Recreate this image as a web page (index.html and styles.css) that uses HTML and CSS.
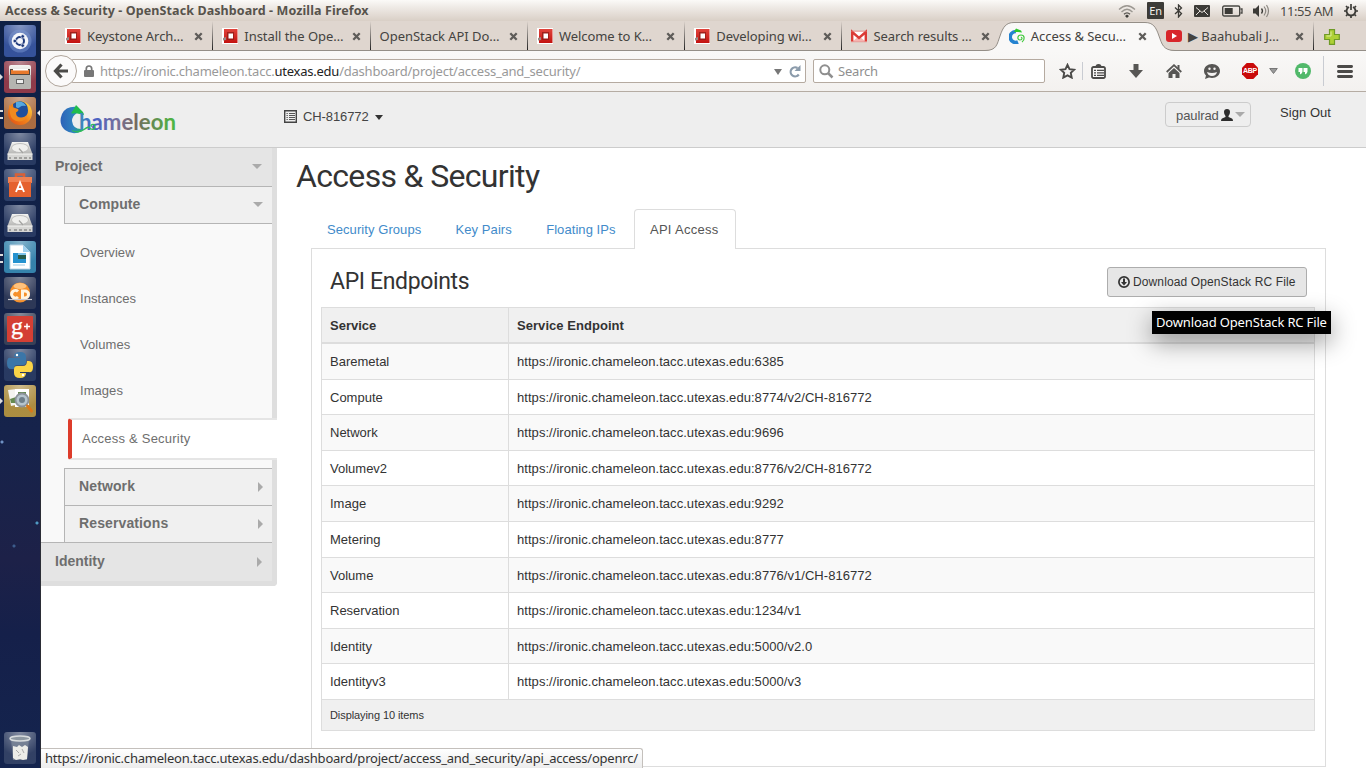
FILE: index.html
```html
<!DOCTYPE html>
<html lang="en">
<head>
<meta charset="utf-8">
<title>Access &amp; Security - OpenStack Dashboard</title>
<link rel="stylesheet" href="styles.css">
</head>
<body>
<svg class="defs" width="0" height="0">
  <defs>
    <radialGradient id="gloss" cx=".5" cy="0" r=".75"><stop offset="0" stop-color="#fff" stop-opacity=".42"/><stop offset="1" stop-color="#fff" stop-opacity=".03"/></radialGradient>
    <linearGradient id="metal" x1="0" y1="0" x2="0" y2="1"><stop offset="0" stop-color="#f4f4f2"/><stop offset="1" stop-color="#b4b4b2"/></linearGradient>
    <linearGradient id="word" x1="0" y1="0" x2="1" y2="0"><stop offset="0" stop-color="#3a8fb8"/><stop offset=".15" stop-color="#4560c8"/><stop offset=".4" stop-color="#77709a"/><stop offset=".58" stop-color="#75695f"/><stop offset="1" stop-color="#4cba42"/></linearGradient>
    <linearGradient id="body" x1="0" y1="0" x2="1" y2="0"><stop offset="0" stop-color="#2c62b8"/><stop offset=".6" stop-color="#2f82c0"/><stop offset="1" stop-color="#22b468"/></linearGradient>
    <linearGradient id="fox" x1="0" y1="1" x2="1" y2="0"><stop offset="0" stop-color="#df4a14"/><stop offset=".5" stop-color="#f2851c"/><stop offset="1" stop-color="#ffe14a"/></linearGradient>
    <linearGradient id="red" x1="0" y1="0" x2="0" y2="1"><stop offset="0" stop-color="#e0443c"/><stop offset="1" stop-color="#c3120f"/></linearGradient>
    <symbol id="stack" viewBox="0 0 16 16"><path fill="#fff" d="M0 0h16v16H0z"/><path fill="url(#red)" d="M2 1h13.500v14H2z"/><path fill="#8d1a16" d="M5 4h7v8H5z" opacity=".75"/><path fill="#9a8a86" d="M1 10l3-1v3l-3 .5z"/><path fill="#fff" d="M6.500 5.500h4.500v5H6.500z"/></symbol>
    <symbol id="x" viewBox="0 0 9 9"><path d="M1.300 1.300l6.400 6.400M7.700 1.300L1.300 7.700" stroke="#5e5c59" stroke-width="2.300"/></symbol>
    <symbol id="drive" viewBox="0 0 32 32"><path fill="url(#metal)" d="M8 9h16l4.500 12h-25z"/><path fill="#d6d6d4" d="M3.500 21h25v6h-25z"/><path d="M3.500 21h25" stroke="#f6f6f4"/><ellipse cx="16" cy="15" rx="8.500" ry="4.500" fill="#efefed" stroke="#b4b4b2" stroke-width=".8"/><path d="M15 15.500l4 4.500" stroke="#a2a2a0" stroke-width="1.200"/><path d="M5 25h2M10 25h3M15 25h3M20 25h3M25 25h2" stroke="#8d8d8b" stroke-width="1.500"/></symbol>
  </defs>
</svg>
<div class="desktop">
  <header class="panel">
    <div class="panel-title">Access &amp; Security - OpenStack Dashboard - Mozilla Firefox</div>
    <div class="indicators">
      <svg width="18" height="14" viewBox="0 0 18 14" fill="none" stroke="#9b9791" stroke-width="1.300"><path d="M1 5.500Q9-2 17 5.500M3.500 8Q9 2.500 14.500 8"/><path d="M6 10.300Q9 7.500 12 10.300" stroke="#55524d"/><path d="M7 12l2-1.500 2 1.500-2 2z" fill="#3c3b37" stroke="none"/></svg>
      <span class="lang">En</span>
      <svg width="9" height="14" viewBox="0 0 9 14" fill="none" stroke="#3c3b37" stroke-width="1.300"><path d="M1 3.500l6.500 6L4.500 13V1l3 3L1 10"/></svg>
      <svg width="16" height="12" viewBox="0 0 16 12"><rect width="16" height="12" rx="1" fill="#3c3b37"/><path d="M2 2.500l6 5 6-5M2 10l4-4M14 10l-4-4" stroke="#e8e3de" fill="none"/></svg>
      <svg width="21" height="12" viewBox="0 0 21 12"><rect x=".7" y="1" width="17" height="10" rx="1.500" fill="none" stroke="#4a4945" stroke-width="1.400"/><rect x="2.700" y="3" width="8" height="6" fill="#3c3b37"/><path d="M18.500 4H20v4h-1.500" fill="none" stroke="#4a4945" stroke-width="1.300"/></svg>
      <svg width="17" height="14" viewBox="0 0 17 14"><path fill="#3c3b37" d="M0 4.500h2.500L6 1v12L2.500 9.500H0z"/><path d="M8.500 4.500q2 2.500 0 5" fill="none" stroke="#3c3b37" stroke-width="1.300"/><path d="M11 2.500q3.500 4.500 0 9M13.500 1q4 6 0 12" fill="none" stroke="#8b8781" stroke-width="1.200"/></svg>
      <span class="clock">11:55 AM</span>
      <svg width="14" height="14" viewBox="0 0 14 14" fill="none" stroke="#3c3b37"><path d="M5 3A4.500 4.500 0 1 0 9 3" stroke-width="1.900"/><path d="M7 0v6" stroke-width="1.700"/><path d="M0 7h2.500M11.500 7H14M2 2l1.500 1.500M12 2l-1.500 1.500M2 12l1.500-1.500M12 12l-1.500-1.500M7 11.500V14" stroke-width="1.700"/></svg>
    </div>
  </header>
  <div class="workspace">
    <nav class="launcher">
      <svg class="tile" viewBox="0 0 32 32"><rect width="32" height="32" rx="3" fill="#2f4d98"/><rect width="32" height="32" rx="3" fill="url(#gloss)"/><circle cx="16" cy="16" r="11.500" fill="#7f9bd4" opacity=".45"/><circle cx="16" cy="16" r="8.300" fill="#f5f7fb"/><circle cx="16" cy="16" r="4" fill="none" stroke="#1f3a7c" stroke-width="2"/><g fill="#1f3a7c" stroke="#f5f7fb" stroke-width=".7"><circle cx="10.800" cy="16" r="1.800"/><circle cx="18.700" cy="11.400" r="1.800"/><circle cx="18.700" cy="20.600" r="1.800"/></g></svg>
      <div class="slot one"><svg class="tile" viewBox="0 0 32 32"><rect width="32" height="32" rx="3" fill="#8b3444"/><rect width="32" height="32" rx="3" fill="url(#gloss)"/><rect x="5" y="4" width="22" height="24" rx="2" fill="url(#metal)"/><path fill="#54473e" d="M6 8h20v6H6z"/><path fill="#e8792c" d="M7 9h18v4H7z"/><path fill="#fff" d="M9 8h15v1.500H9z"/><path fill="#b5b5b1" d="M5 14h22v12a2 2 0 0 1-2 2H7a2 2 0 0 1-2-2z"/><rect x="12.500" y="18.500" width="7" height="4" fill="#eee" stroke="#666"/></svg></div>
      <div class="slot two focus"><svg class="tile" viewBox="0 0 32 32"><rect width="32" height="32" rx="3" fill="#a8683c"/><rect width="32" height="32" rx="3" fill="url(#gloss)"/><circle cx="16" cy="16" r="12" fill="url(#fox)"/><path fill="#1f4f9c" d="M9 7q4-3.500 9-2.500 6 2 6 9 0 6-6 8-6 0-8-5z"/><path fill="#55a8e0" d="M12 5q7-2 10 4-4-1-6 1t-4 0z"/><path fill="#f08a1f" d="M5 8l3 2 6 2q1.500 1.500-2 3.500 0 5 5 5 4 0 6-3-1 7-8 7-8-1-9-8z"/></svg></div>
      <svg class="tile" viewBox="0 0 32 32"><rect width="32" height="32" rx="3" fill="#22345d"/><rect width="32" height="32" rx="3" fill="url(#gloss)"/><use href="#drive"/></svg>
      <svg class="tile" viewBox="0 0 32 32"><rect width="32" height="32" rx="3" fill="#263963"/><rect width="32" height="32" rx="3" fill="url(#gloss)"/><path d="M12 9V5.500h8V9" stroke="#d96036" stroke-width="2.500" fill="none"/><path fill="#f08152" d="M4 8h24v6H4z"/><path fill="#e5622f" d="M5 13h22v15H5z"/><path d="M12 23l4-9.500L20 23M13.500 20h5" fill="none" stroke="#fff" stroke-width="1.900"/></svg>
      <svg class="tile" viewBox="0 0 32 32"><rect width="32" height="32" rx="3" fill="#22345d"/><rect width="32" height="32" rx="3" fill="url(#gloss)"/><use href="#drive"/></svg>
      <div class="slot two"><svg class="tile" viewBox="0 0 32 32"><rect width="32" height="32" rx="3" fill="#2f7fa9"/><rect width="32" height="32" rx="3" fill="url(#gloss)"/><path fill="#fff" stroke="#bcd3e4" d="M6 4h13l7 7v17H6z"/><path fill="#9fd0ee" d="M19 4v7h7z"/><path fill="#2692cf" d="M9 12h13v10H9z"/><path fill="#285c4d" d="M14 13h8v5h-8z"/><path fill="#7fc4ed" d="M14 12h8v2h-8z"/><path d="M9 24h12" stroke="#9fc9e2"/></svg></div>
      <svg class="tile" viewBox="0 0 32 32"><rect width="32" height="32" rx="3" fill="#273252"/><rect width="32" height="32" rx="3" fill="url(#gloss)"/><circle cx="16" cy="15.500" r="10" fill="#f6912b"/><ellipse cx="16" cy="9" rx="6.500" ry="3" fill="#ffc27c"/><g fill="none" stroke="#fff5e2" stroke-width="3"><path d="M14 14.500a3.800 3.800 0 1 0 0 5.500M18.500 14v7h2.500a3.500 3.500 0 0 0 0-7z"/></g><path d="M4 22.500h24" stroke="#c9c9cf" stroke-width="1.200"/></svg>
      <svg class="tile" viewBox="0 0 32 32"><rect width="32" height="32" rx="3" fill="#313a52"/><rect width="32" height="32" rx="3" fill="url(#gloss)"/><rect x="3" y="3" width="26" height="26" rx="1" fill="#d43f34"/><text x="7" y="21" class="gplus">g</text><path d="M20 13.500h6M23 10.500v6" stroke="#fff" stroke-width="1.500"/></svg>
      <svg class="tile" viewBox="0 0 32 32"><rect width="32" height="32" rx="3" fill="#22345d"/><rect width="32" height="32" rx="3" fill="url(#gloss)"/><path fill="#3b76a8" d="M10 8q0-5 6-5t6 5v5q0 3-3 3h-6q-3 0-3 4H7q-4 0-4-6t4-5h9V8z"/><path fill="#fad447" d="M22 24q0 5-6 5t-6-5v-4q0-3 3-3h6q4 0 4-5h2q4 0 4 6t-4 5h-9v1z"/><circle cx="13" cy="6" r="1.200" fill="#fff"/><circle cx="19" cy="26" r="1.200" fill="#fff"/></svg>
      <div class="slot one"><svg class="tile" viewBox="0 0 32 32"><rect width="32" height="32" rx="3" fill="#a98a3b"/><rect width="32" height="32" rx="3" fill="url(#gloss)"/><path fill="#f4f4ef" d="M4 5l9-1 3 15-9 2z"/><path fill="#fff" d="M11 4h14v18H11z"/><path fill="#668a50" d="M6 14l6-2v6H7zM14 7h8v5h-8z"/><circle cx="18" cy="15" r="6.500" fill="#b5c4cd" stroke="#8b9298" stroke-width="1.800"/><circle cx="18" cy="15" r="3" fill="#6f7f89"/><path d="M23.500 21l4 5" stroke="#d87719" stroke-width="3" stroke-linecap="round"/></svg></div>
      <svg class="tile trash" viewBox="0 0 32 32"><rect width="32" height="32" rx="3" fill="#2c3b60"/><rect width="32" height="32" rx="3" fill="url(#gloss)"/><path fill="#7c8798" opacity=".8" d="M7 7h18l-2 21H9z"/><path fill="#ecece8" d="M9 14l4 1 2-2 3 2 3-2 3 2-1 12-4 1-3-1-4 1-3-2z"/><path d="M12 18l3 3M18 17l2 4M14 24l3-2" stroke="#aaa"/><ellipse cx="16" cy="6.500" rx="10" ry="2.500" fill="#8e98a2" stroke="#d8dcde" stroke-width="1.500"/></svg>
    </nav>
    <div class="browser">
      <div class="tabstrip">
        <div class="tab"><svg class="fav"><use href="#stack"/></svg><span>Keystone Arch…</span><svg class="close"><use href="#x"/></svg></div>
        <div class="tab"><svg class="fav"><use href="#stack"/></svg><span>Install the Ope…</span><svg class="close"><use href="#x"/></svg></div>
        <div class="tab"><span>OpenStack API Do…</span><svg class="close"><use href="#x"/></svg></div>
        <div class="tab"><svg class="fav"><use href="#stack"/></svg><span>Welcome to K…</span><svg class="close"><use href="#x"/></svg></div>
        <div class="tab"><svg class="fav"><use href="#stack"/></svg><span>Developing wi…</span><svg class="close"><use href="#x"/></svg></div>
        <div class="tab plain"><svg class="fav" viewBox="0 0 16 16"><path fill="#fff" d="M0 3h16v11H0z"/><path fill="#f6b4b0" d="M2 13l5-4h2l5 4z"/><path d="M1.200 13.500V4l6.800 6L14.800 4v9.500" fill="none" stroke="#db3b35" stroke-width="2.400"/><path d="M0 3.200h16M0 13.700h16" stroke="#e1706b" stroke-width=".8"/></svg><span>Search results …</span><svg class="close"><use href="#x"/></svg></div>
        <div class="tab current">
          <svg class="tab-shape" width="190" height="30" viewBox="0 0 190 30"><path d="M0 29.500C12 29.500 12 23 15 15C18 6 21 1.500 29 1.500H160C168 1.500 171 6 174 15C177 23 178 29.500 190 29.500V30H0Z" fill="#f9f8f7"/><path d="M0 29.500C12 29.500 12 23 15 15C18 6 21 1.500 29 1.500H160C168 1.500 171 6 174 15C177 23 178 29.500 190 29.500" fill="none" stroke="#948e87"/></svg>
          <svg class="fav" viewBox="0 0 16 16"><path d="M7 3.500A5.500 5.500 0 1 0 9 14" fill="none" stroke="#2482cf" stroke-width="3.600"/><path fill="#2fc82c" d="M5 4L7 .5l5 2 1 2-4-.5z"/><path d="M13 14c3-2 3-7-1-7s-4 5-1 5 2-3 1-2.500" fill="none" stroke="#40c83c" stroke-width="1.200"/></svg><span>Access &amp; Secu…</span><svg class="close"><use href="#x"/></svg></div>
        <div class="tab"><svg class="fav" viewBox="0 0 16 16"><rect y="2" width="16" height="12" rx="3" fill="#d8262b"/><path fill="#fff" d="M6 5v6l5-3z"/></svg><span>▶ Baahubali J…</span><svg class="close"><use href="#x"/></svg></div>
        <svg class="newtab" width="16" height="16" viewBox="0 0 16 16"><path d="M5.500 .7h5v4.800h4.800v5h-4.800v4.800h-5v-4.800H.7v-5h4.800z" fill="#aed136" stroke="#6f9a27" stroke-width="1.200"/><path d="M7 2.500v4.500H2.500" stroke="#dcec9a" fill="none"/></svg>
      </div>
      <div class="toolbar">
        <span class="back"><svg width="16" height="16" viewBox="0 0 16 16" fill="none" stroke="#4b4a48" stroke-width="3.200"><path d="M8.500 1.500L2.500 8l6 6.500M3 8h12"/></svg></span>
        <div class="urlbar">
          <svg width="10" height="12" viewBox="0 0 10 12"><path d="M2.300 6V3.700a2.700 2.700 0 0 1 5.400 0V6" fill="none" stroke="#777" stroke-width="1.700"/><rect y="5" width="10" height="7" rx="1" fill="#777"/></svg>
          <span class="url">https://ironic.chameleon.tacc.<b>utexas.edu</b>/dashboard/project/access_and_security/</span>
          <svg class="drop" width="8" height="6" viewBox="0 0 8 6"><path fill="#777" d="M0 0h8L4 6z"/></svg>
          <svg width="12" height="13" viewBox="0 0 12 13"><path d="M9.800 9.500A4.500 4.500 0 1 1 8.500 3" fill="none" stroke="#8b9bab" stroke-width="2.200"/><path fill="#8b9bab" d="M11.500 0v6H5.500z"/></svg>
        </div>
        <div class="search"><svg width="15" height="15" viewBox="0 0 15 15" fill="none" stroke="#8f8f8f" stroke-width="2"><circle cx="5.800" cy="5.800" r="4.500"/><path d="M9 9l4.500 4.500" stroke-width="2.500"/></svg><span>Search</span></div>
        <span class="tool star"><svg width="17" height="16" viewBox="0 0 17 16"><path d="M8.500 1.800l2 4.300 4.700.6-3.400 3.200.9 4.700-4.200-2.300-4.200 2.300.9-4.700L1.800 6.700l4.700-.6z" fill="none" stroke="#4b4a48" stroke-width="1.900"/></svg></span>
        <span class="tool list"><svg width="15" height="15" viewBox="0 0 15 15"><path d="M1 4.500a1.500 1.500 0 0 1 1.500-1.500h10A1.500 1.500 0 0 1 14 4.500v8a1.500 1.500 0 0 1-1.500 1.500h-10A1.500 1.500 0 0 1 1 12.500z" fill="#f8f7f6" stroke="#4b4a48" stroke-width="1.800"/><path d="M4.500 3q0-3 3-3t3 3z" fill="#4b4a48"/><path d="M3 6.300h2M6 6.300h7M3 8.800h2M6 8.800h7M3 11.300h2M6 11.300h7" stroke="#4b4a48" stroke-width="1.300"/></svg></span>
        <span class="tool"><svg width="14" height="14" viewBox="0 0 14 14"><path fill="#575654" d="M4.500 0h5v6H14l-7 8-7-8h4.500z"/></svg></span>
        <span class="tool"><svg width="16" height="14" viewBox="0 0 16 14"><path d="M.7 8L8 1.200 15.300 8" fill="none" stroke="#575654" stroke-width="1.800"/><path fill="#575654" d="M11.500 1h2v4h-2zM8 4l5.500 5v5H9.500v-4h-3v4h-4V9z"/></svg></span>
        <span class="tool"><svg width="16" height="15" viewBox="0 0 16 15"><path fill="#575654" d="M8 0c4.500 0 8 3 8 7s-3.500 7-8 7l-3-.5L1 15l1-3.500C.7 10 0 9 0 7c0-4 3.500-7 8-7z"/><path d="M3 8q5 2 10 0-1 4-5 4T3 8z" fill="#f4f2f1"/><circle cx="5.500" cy="4.800" r="1.200" fill="#f4f2f1"/><circle cx="10.500" cy="4.800" r="1.200" fill="#f4f2f1"/></svg></span>
        <span class="tool abp"><svg width="16" height="16" viewBox="0 0 16 16"><path fill="#c90a0a" d="M4.700 0h6.600L16 4.700v6.600L11.300 16H4.700L0 11.300V4.700z"/></svg><b>ABP</b></span>
        <svg class="tri" width="9" height="6" viewBox="0 0 9 6"><path d="M.7.500h7.600L4.500 5.500z" fill="#999" stroke="#777"/></svg>
        <span class="tool chat"><svg width="16" height="16" viewBox="0 0 16 16"><circle cx="8" cy="8" r="8" fill="#51b96a"/><path fill="#fff" d="M3.500 5h4v3.500q0 2-2.500 3V9H3.500zM8.500 5h4v3.500q0 2-2.500 3V9H8.500z"/></svg></span>
        <span class="tool menu"><svg width="16" height="13" viewBox="0 0 16 13" stroke="#4b4a48" stroke-width="2.800" stroke-linecap="round"><path d="M1.400 1.500h13.200M1.400 6.500h13.200M1.400 11.500h13.200"/></svg></span>
      </div>
      <div class="page">
        <div class="site-head">
          <svg class="logo" width="120" height="32" viewBox="0 0 120 32">
            <path d="M18 2Q6 .5 2 9-2 19 5 25q8 6 17 1l-1-2q-8 0-9-8 0-5 5-8z" fill="url(#body)"/>
            <path fill="#1fbd4d" d="M14 4l2-4 2 2 5 5 1 3-9-2q-2 1-4 0z"/>
            <text class="wordmark" x="19" y="25" textLength="97" lengthAdjust="spacingAndGlyphs">hameleon</text>
            <path d="M12 25.500q7 3 12-1t6-1q4 2 5-1 0-4-3-3-2 1 0 2" stroke="#2cbb59" stroke-width="1.300" fill="none"/>
          </svg>
          <div class="project-pick"><svg width="13" height="13" viewBox="0 0 13 13"><path d="M.7.700h11.600v11.600H.7z" fill="none" stroke="#444" stroke-width="1.400"/><path d="M2.500 3.500h1.300M5 3.500h6M2.500 5.500h1.300M5 5.500h6M2.500 7.500h1.300M5 7.500h6M2.500 9.500h1.300M5 9.500h6" stroke="#555"/></svg><span>CH-816772</span><i class="caret"></i></div>
          <div class="user"><span>paulrad</span><svg width="12" height="12" viewBox="0 0 12 12"><path fill="#2d2d2d" d="M6 0q3 0 3 3 0 2.500-1.500 4v1L11 9.500q1 .5 1 2.500H0q0-2 1-2.500L4.500 8V7Q3 5.500 3 3q0-3 3-3z"/></svg><i class="caret light"></i></div>
          <a class="signout">Sign Out</a>
        </div>
        <div class="content">
          <aside class="sidebar">
            <div class="group first"><span>Project</span><i class="arrow down"></i></div>
            <div class="sub compute"><span>Compute</span><i class="arrow down"></i></div>
            <ul class="links"><li>Overview</li><li>Instances</li><li>Volumes</li><li>Images</li></ul>
            <div class="active-link">Access &amp; Security</div>
            <div class="sub"><span>Network</span><i class="arrow right"></i></div>
            <div class="sub"><span>Reservations</span><i class="arrow right"></i></div>
            <div class="group last"><span>Identity</span><i class="arrow right"></i></div>
          </aside>
          <main class="main">
            <h1>Access &amp; Security</h1>
            <div class="nav-tabs"><a>Security Groups</a><a>Key Pairs</a><a>Floating IPs</a><a class="on">API Access</a></div>
            <section class="pane">
              <div class="pane-head"><h2>API Endpoints</h2><button class="download"><svg width="12" height="12" viewBox="0 0 12 12"><circle cx="6" cy="6" r="5.100" fill="none" stroke="#333" stroke-width="1.700"/><path fill="#333" d="M5 2.500h2V6h2L6 9.500 3 6h2z"/></svg><span>Download OpenStack RC File</span></button></div>
              <table>
                <thead><tr><th>Service</th><th>Service Endpoint</th></tr></thead>
                <tbody>
                  <tr><td>Baremetal</td><td>https://ironic.chameleon.tacc.utexas.edu:6385</td></tr>
                  <tr><td>Compute</td><td>https://ironic.chameleon.tacc.utexas.edu:8774/v2/CH-816772</td></tr>
                  <tr><td>Network</td><td>https://ironic.chameleon.tacc.utexas.edu:9696</td></tr>
                  <tr><td>Volumev2</td><td>https://ironic.chameleon.tacc.utexas.edu:8776/v2/CH-816772</td></tr>
                  <tr><td>Image</td><td>https://ironic.chameleon.tacc.utexas.edu:9292</td></tr>
                  <tr><td>Metering</td><td>https://ironic.chameleon.tacc.utexas.edu:8777</td></tr>
                  <tr><td>Volume</td><td>https://ironic.chameleon.tacc.utexas.edu:8776/v1/CH-816772</td></tr>
                  <tr><td>Reservation</td><td>https://ironic.chameleon.tacc.utexas.edu:1234/v1</td></tr>
                  <tr><td>Identity</td><td>https://ironic.chameleon.tacc.utexas.edu:5000/v2.0</td></tr>
                  <tr><td>Identityv3</td><td>https://ironic.chameleon.tacc.utexas.edu:5000/v3</td></tr>
                </tbody>
                <tfoot><tr><td colspan="2">Displaying 10 items</td></tr></tfoot>
              </table>
            </section>
          </main>
        </div>
        <div class="tooltip">Download OpenStack RC File</div>
        <div class="status"><span>https://ironic.chameleon.tacc.utexas.edu/dashboard/project/access_and_security/api_access/openrc/</span></div>
      </div>
    </div>
  </div>
</div>
</body>
</html>
```
FILE: styles.css
```css
* { box-sizing: border-box; }
body { margin: 0; font: 13px/18px "Liberation Sans", Arial, sans-serif; color: #333; }
svg { display: block; flex: none; }
.defs { position: absolute; }
.desktop { width: 1366px; height: 768px; overflow: hidden; display: flex; flex-direction: column; background: #fff; }

/* Desktop panel */
.panel { flex: none; height: 21px; display: flex; justify-content: space-between; align-items: center; padding: 0 8px 0 5px; background: linear-gradient(#fbfaf8, #f0ece8 30%, #d9cfc6); font-family: "Noto Sans", sans-serif; color: #4c4a45; white-space: nowrap; }
.panel-title { font-weight: bold; font-size: 12.5px; letter-spacing: .1px; color: #57534c; }
.indicators { display: flex; align-items: center; }
.lang { width: 17px; height: 17px; margin: 0 10px 0 11px; background: #3c3b37; color: #f2efea; border-radius: 1px; text-align: center; font-size: 11px; line-height: 17px; letter-spacing: -.2px; }
.indicators svg:nth-of-type(2) { margin-right: 11px; }
.indicators svg:nth-of-type(3) { margin-right: 12px; }
.indicators svg:nth-of-type(4) { margin-right: 10px; }
.clock { margin: 0 11px 0 10px; width: 53px; font-size: 13px; letter-spacing: -.45px; }

.workspace { flex: 1; min-height: 0; display: flex; }

/* Launcher */
.launcher { flex: none; width: 41px; padding: 4px 0 4px 4px; display: flex; flex-direction: column; gap: 4px; border-right: 1px solid #2b2d36; background: radial-gradient(circle at 2px 421px, #6f91c4 0 1px, transparent 2px), radial-gradient(circle at 37px 502px, #4f9ac4 0 1px, transparent 2px), radial-gradient(circle at 14px 525px, #3c5c8c 0 1px, transparent 2px), linear-gradient(#0e2045, #16234b 55%, #1d2148 72%, #15204a 82%, #14244e); }
.tile { width: 32px; height: 32px; }
.trash { margin-top: auto; }
.slot { position: relative; flex: none; width: 36px; height: 32px; }
.slot::before, .focus::after { content: ""; position: absolute; top: 13px; border: 3px solid transparent; }
.slot::before { left: -4px; border-left-color: #ddd; border-right: 0; }
.slot.two::before { top: 13px; width: 3px; height: 5px; border: solid #ddd; border-width: 2px 0; }
.focus::after { right: 0; border-right-color: #eee; border-left: 0; }
.gplus { font: 24px "Liberation Serif", serif; fill: #fff; stroke: #fff; stroke-width: .4px; }

/* Browser chrome */
.browser { flex: 1; min-width: 0; display: flex; flex-direction: column; }
.tabstrip { flex: none; height: 30px; padding-left: 15px; display: flex; background: #dfd6cf; border-bottom: 1px solid #948e87; font: 13px/18px "Noto Sans", "DejaVu Sans", sans-serif; color: #444340; }
.tab { position: relative; flex: none; width: 157.3px; padding: 1px 10px 0 9px; display: flex; align-items: center; white-space: nowrap; background: linear-gradient(transparent, #222) no-repeat right / 1px 100%; letter-spacing: -.05px; }
.tab.plain, .tab.current { background: none; }
.tab > span { position: relative; }
.fav { width: 16px; height: 16px; margin-right: 6px; position: relative; }
.close { width: 9px; height: 9px; margin-left: auto; position: relative; }
.tab-shape { position: absolute; left: -15px; top: 0; }
.newtab { margin: 8px 0 0 10px; }
.toolbar { flex: none; height: 41px; display: flex; align-items: center; background: linear-gradient(#f9f8f7, #f3f1ef); border-bottom: 1px solid #b5aca3; padding-left: 4px; font: 13px/18px "Noto Sans", sans-serif; }
.back { position: relative; flex: none; width: 32px; height: 32px; border: 1px solid #b0a59b; border-radius: 50%; background: #fbfafa; display: grid; place-items: center; }
.urlbar { flex: none; width: 735px; height: 24px; margin-left: -6px; padding: 0 4px 0 12px; display: flex; align-items: center; border: 1px solid #b5aaa0; border-radius: 2px; background: #fff; }
.url { margin-left: 6px; color: #999; letter-spacing: -.23px; white-space: nowrap; }
.url b { font-weight: normal; color: #222; }
.drop { margin: 2px 7px 0 auto; }
.search { flex: none; width: 232px; height: 24px; margin-left: 7px; padding-left: 5px; display: flex; align-items: center; gap: 4px; border: 1px solid #b5aaa0; border-radius: 2px; background: #fff; color: #8f8f8f; letter-spacing: -.2px; }
.tool { flex: none; width: 38px; height: 40px; display: grid; place-items: center; }
.tool.star { width: 26px; height: 18px; margin-left: 12px; padding-right: 5px; border-right: 1px solid #c9ccd2; }
.tool.list { width: 34px; padding-right: 4px; }
.tool.chat { width: 46px; padding-left: 5px; height: 30px; border-right: 1px solid #c9ccd2; }
.tool.menu { width: 42px; }
.abp > * { grid-area: 1 / 1; }
.abp b { position: relative; font: bold 7px/10px "Liberation Sans", sans-serif; color: #fff; letter-spacing: -.2px; }

/* Dashboard */
.page { position: relative; flex: 1; min-height: 0; display: flex; flex-direction: column; overflow: hidden; }
.site-head { flex: none; height: 56px; display: flex; background: #eee; border-bottom: 1px solid #ccc; }
.logo { margin: 13px 0 0 19px; }
.wordmark { font: bold 22px Lato, sans-serif; fill: url(#word); }
.project-pick { display: flex; align-items: center; height: 18px; margin: 15px 0 0 104px; color: #444; white-space: nowrap; }
.project-pick span { margin-left: 6px; width: 66px; padding-top: 1px; letter-spacing: -.1px; }
.caret { border: 4px solid transparent; border-top: 5px solid #333; border-bottom: 0; margin: 3px 0 0 6px; }
.caret.light { border-width: 5px 5px 0; border-top-color: #aaa; margin: 0 0 0 2px; }
.user { width: 86px; height: 25px; margin: 10px 0 0 auto; padding-left: 10px; display: flex; align-items: center; border: 1px solid #ccc; border-radius: 4px; color: #555; }
.user span { width: 42px; margin-right: 3px; padding-top: 2px; letter-spacing: -.1px; }
.signout { width: 51px; margin: 12px 35px 0 29px; letter-spacing: .05px; white-space: nowrap; }
.content { flex: 1; min-height: 0; display: flex; }
.sidebar { flex: none; width: 236px; height: 438px; background: #f9f9f9; border: solid #dedede; border-width: 0 5px 5px 0; border-bottom-right-radius: 4px; color: #6e6e6e; }
.group { display: flex; justify-content: space-between; align-items: center; padding: 0 10px 2px 14px; height: 38px; background: #e5e5e5; font-weight: bold; font-size: 14px; }
.group.last { height: 39px; border-top: 1px solid #b5b5b5; }
.sub { display: flex; justify-content: space-between; align-items: center; height: 37px; margin-left: 23px; padding: 0 9px 2px 14px; border: solid #b5b5b5; border-width: 1px 0 0 1px; background: #f0f0f0; font-weight: bold; font-size: 14px; letter-spacing: .12px; }
.sub.compute { height: 38px; border-bottom-width: 1px; }
.arrow { border: 5px solid transparent; margin-top: 2px; }
.arrow.down { border-top-color: #aaa; border-bottom: 0; margin-top: 0; }
.arrow.right { border-left-color: #aaa; border-right: 0; }
.links { list-style: none; margin: 0; padding: 6px 0 4px 39px; letter-spacing: .05px; }
.links li { height: 46px; line-height: 46px; }
.active-link { width: 209px; height: 42px; margin: 0 0 8px 27px; padding: 10px 0 0 10px; border: solid #e5e5e5; border-width: 2px 0; border-left: 4px solid #dd3c2b; border-radius: 3px 0 0 3px; background: #fff; letter-spacing: .22px; position: relative; }
.main { flex: 1; min-width: 0; padding: 0 40px 0 19px; }
h1, h2 { margin: 0; font-family: Roboto, sans-serif; font-weight: normal; }
h1 { height: 61px; font-size: 32px; line-height: 57px; letter-spacing: -.67px; }
.nav-tabs { height: 40px; margin: 0 0 -1px 15px; display: flex; letter-spacing: .07px; position: relative; }
.nav-tabs a { padding: 12px 16px 0; color: #428bca; white-space: nowrap; margin-right: 2.3px; }
.nav-tabs .on { border: 1px solid #ddd; border-bottom: 0; border-radius: 4px 4px 0 0; background: #fff; color: #555; width: 102px; padding: 11px 15px 0; letter-spacing: .3px; }
.pane { margin-left: 15px; height: 519px; border: 1px solid #ddd; padding: 18px 10px 0 9px; }
.pane-head { height: 40px; display: flex; justify-content: space-between; padding: 0 8px 0 9px; }
h2 { font-size: 23px; line-height: 30px; letter-spacing: -.37px; }
.download { width: 200px; height: 30px; padding: 0 0 0 10px; display: flex; align-items: center; gap: 3px; border: 1px solid #adadad; border-radius: 3px; background: #e6e6e6; font: 12px "Liberation Sans", sans-serif; letter-spacing: .12px; color: #333; white-space: nowrap; }
table { width: 994px; table-layout: fixed; border-collapse: separate; border-spacing: 0; border: 1px solid #ddd; }
th, td { text-align: left; padding: 2px 8px 0; }
tr > :first-child { width: 186px; }
tr > :nth-child(2) { border-left: 1px solid #ddd; letter-spacing: .05px; }
th { height: 36px; background: #f0f0f0; border-bottom: 2px solid #ddd; }
tbody td { height: 35.600px; padding-top: 1.500px; border-bottom: 1px solid #ddd; }
tbody tr:nth-child(odd) { background: #f9f9f9; }
tfoot td { height: 30px; padding-top: 1px; background: #f0f0f0; font-size: 11px; letter-spacing: -.08px; }
.tooltip { position: absolute; left: 1111px; top: 219px; width: 179px; height: 23px; padding-left: 4px; background: #000; color: #fff; box-shadow: 0 8px 24px rgba(0,0,0,.42); font: 13px/22px "Noto Sans", sans-serif; letter-spacing: -.16px; white-space: nowrap; }
.status { position: absolute; left: 0; bottom: 0; width: 602px; height: 20px; padding-left: 4px; border: solid #c4c0bc; border-width: 1px 1px 0 0; border-top-right-radius: 3px; background: linear-gradient(#fff, #ececec); font: 13px/18px "Noto Sans", sans-serif; white-space: nowrap; letter-spacing: -.225px; }
```
